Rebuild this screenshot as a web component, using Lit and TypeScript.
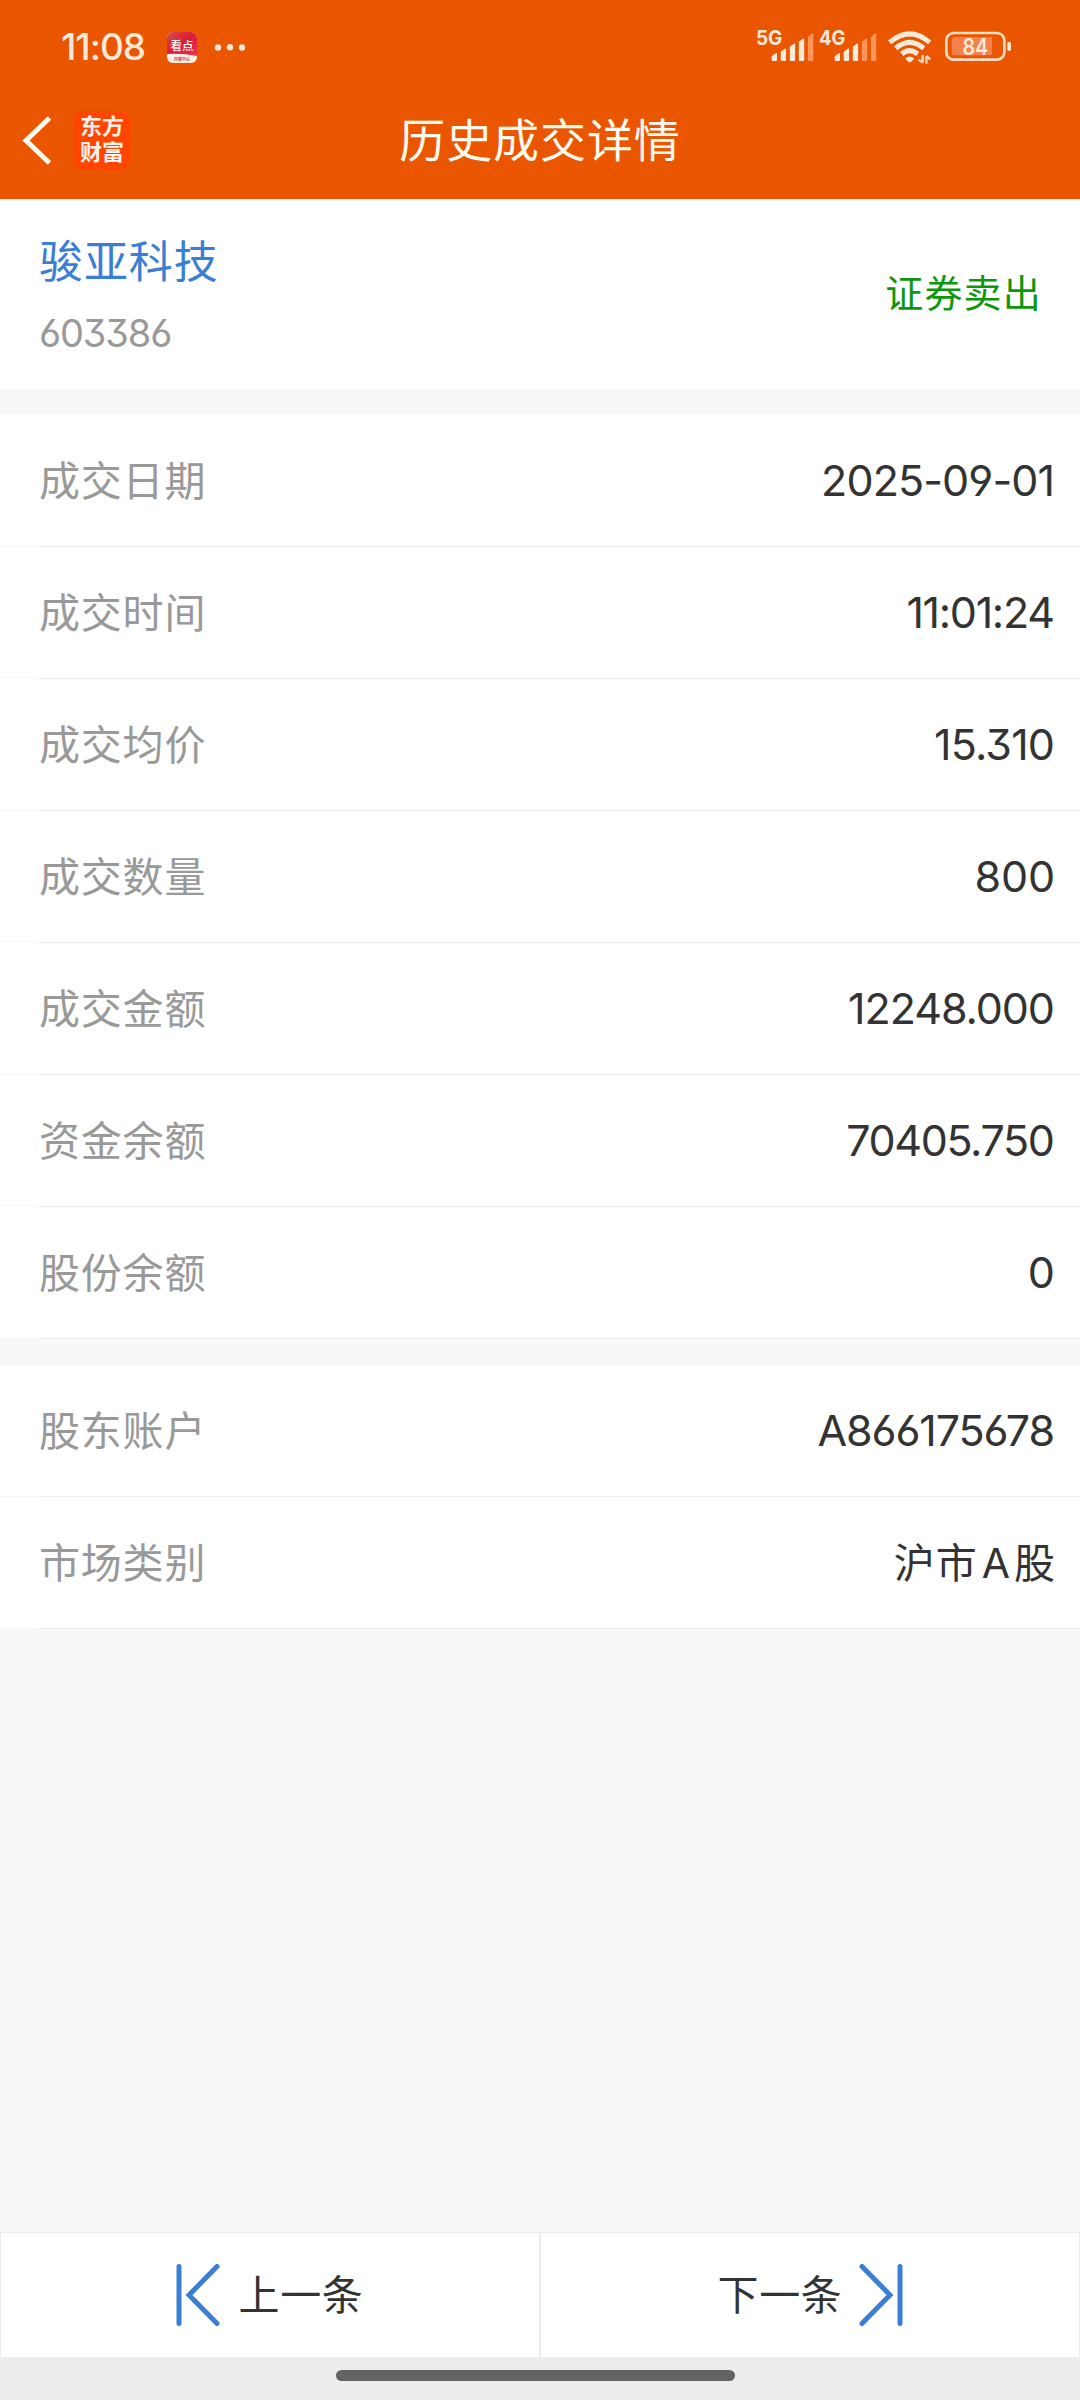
import { LitElement, html, css, svg } from "lit";
import { customElement } from "lit/decorators.js";

interface Row {
  label: string;
  value: string;
  spacing: number;
}

const TRADE_ROWS: Row[] = [
  { label: "成交日期", value: "2025-09-01", spacing: -0.9 },
  { label: "成交时间", value: "11:01:24", spacing: -1.3 },
  { label: "成交均价", value: "15.310", spacing: -0.8 },
  { label: "成交数量", value: "800", spacing: -0.2 },
  { label: "成交金额", value: "12248.000", spacing: -1.05 },
  { label: "资金余额", value: "70405.750", spacing: -1.35 },
  { label: "股份余额", value: "0", spacing: 0 },
];

const ACCOUNT_ROWS: Row[] = [
  { label: "股东账户", value: "A866175678", spacing: -1.1 },
  { label: "市场类别", value: "沪市A股", spacing: 1 },
];

@customElement("app-root")
export class AppRoot extends LitElement {
  static styles = css`
    :host {
      display: flex;
      flex-direction: column;
      width: 1080px;
      height: 2400px;
      background: #f7f8fa;
      color: #333;
      font-family: Inter, "Noto Sans CJK SC", sans-serif;
      font-feature-settings: "cv03", "cv04", "cv09";
      white-space: nowrap;
      overflow: hidden;
    }
    * { box-sizing: border-box; }
    svg { display: block; flex: none; }
    .top { flex: none; height: 199px; background: #ea5500; }
    .status {
      display: flex;
      align-items: center;
      height: 94px;
      padding-left: 61px;
      color: #ffe9d8;
    }
    .clock {
      width: 106px;
      font-size: 37px;
      line-height: 94px;
      font-weight: 500;
      letter-spacing: -1px;
    }
    .spacer { flex: 1; }
    .nav {
      display: grid;
      grid-template-columns: 200px 1fr 200px;
      align-items: center;
      height: 105px;
    }
    .nav-left { display: flex; align-items: center; height: 105px; padding-bottom: 13px; }
    .logo {
      display: grid;
      align-content: center;
      justify-items: center;
      width: 58px;
      height: 59px;
      margin-left: 20px;
      padding-bottom: 2px;
      border-radius: 12px;
      background: #ff4600;
      color: #fff3ec;
      font-size: 22px;
      line-height: 26px;
      font-weight: 700;
    }
    .title {
      text-align: center;
      color: #fff9ee;
      font-size: 46px;
      letter-spacing: 0.9px;
      line-height: 92px;
      padding-bottom: 13px;
    }
    .head {
      flex: none;
      display: flex;
      justify-content: space-between;
      align-items: center;
      height: 190px;
      padding: 0 38px 0 39px;
      background: #fff;
      border-top: 1px solid #fff1df;
    }
    .name { font-size: 44px; line-height: 60px; letter-spacing: 0.9px; color: #3a7ed6; }
    .code { margin-top: 16px; font-size: 38px; line-height: 50px; letter-spacing: -1.1px; color: #999; }
    .side { padding-bottom: 3px; font-size: 38px; line-height: 50px; letter-spacing: 1.2px; color: #0d970d; }
    .group { flex: none; margin-top: 26px; background: #fff; }
    .row {
      display: flex;
      justify-content: space-between;
      align-items: center;
      height: 132px;
      padding: 0 25px 0 39px;
      background:
        linear-gradient(#ebecee, #ebecee) 39px 100% / 1041px 1px no-repeat,
        linear-gradient(#f8f8f9, #f8f8f9) 0 100% / 39px 1px no-repeat;
    }
    .label { font-size: 41px; line-height: 60px; letter-spacing: 0.8px; color: #999; }
    .value { padding-bottom: 2px; font-size: 43px; line-height: 60px; }
    .value.cjk { padding-bottom: 0; font-size: 41px; }
    .latin { margin: 0 3px 0 4px; }
    .fill { flex: 1; }
    .pager { flex: none; display: flex; height: 125px; background: #fff; }
    .page {
      flex: 1;
      display: flex;
      align-items: center;
      justify-content: center;
      gap: 18px;
      border: 1px solid #ebebeb;
      border-bottom: 0;
      font-size: 41px;
      letter-spacing: 0.7px;
    }
    .page.next { gap: 16px; }
    .page span { padding-bottom: 7px; }
    .gesture {
      flex: none;
      display: flex;
      justify-content: center;
      height: 43px;
      padding: 13px 9px 0 0;
      background: #ededed;
    }
    .pill { width: 399px; height: 11px; border-radius: 6px; background: #636363; }
    .svg-text { font-family: Inter, sans-serif; fill: #ffe9d8; }
    .svg-cjk { font-family: "Noto Sans CJK SC", sans-serif; }
  `;

  private newsIcon() {
    return html`<svg width="90" height="94" viewBox="0 0 90 94">
      <defs>
        <linearGradient id="red" x1="0" y1="0" x2="1" y2="1">
          <stop offset="0" stop-color="#d94a4a" />
          <stop offset="0.5" stop-color="#d81f36" />
          <stop offset="1" stop-color="#ee3548" />
        </linearGradient>
      </defs>
      <rect x="0" y="32" width="30" height="31" rx="6" fill="#fff0e8" />
      <path d="M0 54V38a6 6 0 0 1 6-6h18a6 6 0 0 1 6 6v18q-15-3-30-2z" fill="url(#red)" />
      <text class="svg-cjk" x="15" y="49.5" font-size="11.5" font-weight="500" text-anchor="middle" fill="#fff">看点</text>
      <text class="svg-cjk" x="15" y="61" font-size="4" font-weight="700" text-anchor="middle" fill="#d8303c">内容中心</text>
      <g fill="#ffe9d8">
        <circle cx="51" cy="47.5" r="3.2" />
        <circle cx="63" cy="47.3" r="3.2" />
        <circle cx="75" cy="47.5" r="3.2" />
      </g>
    </svg>`;
  }

  private bars(x: number, lit: number) {
    const tops = [160, 146, 131, 116, 101];
    return tops.map((t, i) => {
      const l = x + i * 27.2;
      return svg`<path d="M${l} ${t + 9}l12-9q4-2 4 2v${178 - t}q0 3-3 3h-10q-3 0-3-3z"
        fill=${i < lit ? "#ffe9d8" : "#ff955b"} />`;
    });
  }

  private statusIcons() {
    return html`<svg width="350" height="94" viewBox="0 0 1050 282">
      <text class="svg-text" x="78" y="135" font-size="60" font-weight="700" textLength="79" lengthAdjust="spacingAndGlyphs">5G</text>
      <text class="svg-text" x="267" y="135" font-size="60" font-weight="700" textLength="79" lengthAdjust="spacingAndGlyphs">4G</text>
      ${this.bars(125, 4)} ${this.bars(314, 3)}
      <g fill="none" stroke="#ffe9d8" stroke-width="15">
        <path d="M479 127Q539 76 599 127" />
        <path d="M497 145Q539 109 581 145" />
        <path d="M515 162Q539 142 563 162" />
      </g>
      <path d="M526 175q13-11 26 0q0 4-13 13q-13-9-13-13z" fill="#ffe9d8" />
      <path d="M578 165v23M578 188l-12-9M589 191v-23M589 168l12 10" stroke="#ffd9bf" stroke-width="7" fill="none" />
      <rect x="649" y="99" width="174" height="80" rx="22" fill="none" stroke="#ffdcc0" stroke-width="8" />
      <path d="M676 111h110v55H676q-11 0-11-11v-33q0-11 11-11z" fill="#f3824a" />
      <rect x="832" y="125" width="11" height="28" rx="5" fill="#ffe9d8" />
      <text class="svg-text" x="736" y="165" font-size="68" font-weight="600" text-anchor="middle" textLength="77" lengthAdjust="spacingAndGlyphs">84</text>
    </svg>`;
  }

  /** Latin letters inside Chinese text get a little room on both sides. */
  private mixed(value: string) {
    return value
      .split(/([A-Z]+)/)
      .map((part) => (/^[A-Z]+$/.test(part) ? html`<span class="latin">${part}</span>` : part));
  }

  private row(r: Row) {
    const cjk = r.value.includes("股");
    return html`<div class="row">
      <span class="label">${r.label}</span>
      <span class="value ${cjk ? "cjk" : ""}" style="letter-spacing:${r.spacing}px;margin-right:${-r.spacing}px">${cjk ? this.mixed(r.value) : r.value}</span>
    </div>`;
  }

  render() {
    return html`
      <header class="top">
        <div class="status">
          <span class="clock">11:08</span>
          ${this.newsIcon()}
          <span class="spacer"></span>
          ${this.statusIcons()}
        </div>
        <div class="nav">
          <div class="nav-left">
            <svg width="53" height="60" viewBox="0 0 53 60">
              <path d="M49.500 8L26 30.500L49.500 53" fill="none" stroke="#fffaf2" stroke-width="5" />
            </svg>
            <div class="logo"><span>东方</span><span>财富</span></div>
          </div>
          <div class="title">历史成交详情</div>
        </div>
      </header>
      <section class="head">
        <div>
          <div class="name">骏亚科技</div>
          <div class="code">603386</div>
        </div>
        <div class="side">证券卖出</div>
      </section>
      <section class="group">${TRADE_ROWS.map((r) => this.row(r))}</section>
      <section class="group">${ACCOUNT_ROWS.map((r) => this.row(r))}</section>
      <div class="fill"></div>
      <nav class="pager">
        <div class="page">
          <svg width="44" height="66" viewBox="0 0 44 66">
            <path d="M3 4.500V61.500M41 4.500L13 33L41 61.500" fill="none" stroke="#3a7ed6" stroke-width="5" stroke-linecap="round" />
          </svg>
          <span>上一条</span>
        </div>
        <div class="page next">
          <span>下一条</span>
          <svg width="44" height="66" viewBox="0 0 44 66">
            <path d="M41 4.500V61.500M3 4.500L31 33L3 61.500" fill="none" stroke="#3a7ed6" stroke-width="5" stroke-linecap="round" />
          </svg>
        </div>
      </nav>
      <footer class="gesture"><div class="pill"></div></footer>
    `;
  }
}
